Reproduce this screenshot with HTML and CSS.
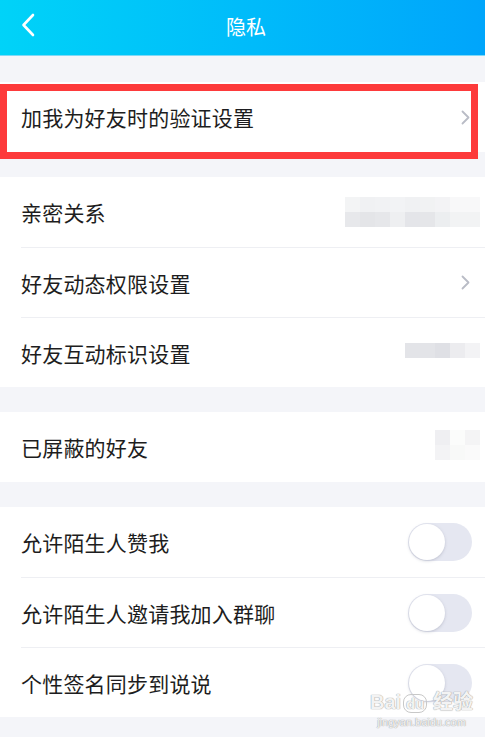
FILE: index.html
```html
<!DOCTYPE html>
<html lang="zh-CN">
<head>
  <meta charset="UTF-8">
  <meta name="viewport" content="width=device-width, initial-scale=1.0">
  <title>隐私</title>
  <link rel="stylesheet" href="styles.css">
</head>
<body>

  <!-- Thanh tiêu đề -->
  <div class="topbar">
    <svg class="back" width="14" height="24" viewBox="0 0 14 24">
      <path d="M12 2 L2.5 12 L12 22" fill="none" stroke="#fff" stroke-width="2.6" stroke-linecap="round" stroke-linejoin="round"/>
    </svg>
    <h1 class="title">隐私</h1>
  </div>

  <div class="content">
    <div class="group">
      <div class="row">
        <span class="label">加我为好友时的验证设置</span>
        <svg class="arrow" width="9" height="15" viewBox="0 0 9 15"><path d="M1.5 1.5 L7.5 7.5 L1.5 13.5" fill="none" stroke="#b9bcc6" stroke-width="1.8" stroke-linecap="round" stroke-linejoin="round"/></svg>
      </div>
      <div class="mark-box"></div>
    </div>

    <div class="group">
      <div class="row">
        <span class="label">亲密关系</span>
        <div class="mosaic mosaic-a">
          <i style="background:#f3f4f5"></i><i style="background:#f0f1f3"></i><i style="background:#f1f2f4"></i><i style="background:#f2f3f5"></i><i style="background:#f0f1f3"></i><i style="background:#f1f2f3"></i><i style="background:#f3f3f5"></i><i style="background:#f8f8f9"></i><i style="background:#f8f8f9"></i>
          <i style="background:#e7e8eb"></i><i style="background:#e4e5e8"></i><i style="background:#e6e7ea"></i><i style="background:#eeeff1"></i><i style="background:#e4e5e9"></i><i style="background:#e5e6e9"></i><i style="background:#eceef0"></i><i style="background:#f2f3f4"></i><i style="background:#f2f3f4"></i>
        </div>
      </div>
      <div class="row">
        <span class="label">好友动态权限设置</span>
        <svg class="arrow" width="9" height="15" viewBox="0 0 9 15"><path d="M1.5 1.5 L7.5 7.5 L1.5 13.5" fill="none" stroke="#b9bcc6" stroke-width="1.8" stroke-linecap="round" stroke-linejoin="round"/></svg>
      </div>
      <div class="row">
        <span class="label">好友互动标识设置</span>
        <div class="mosaic mosaic-b">
          <i style="background:#e3e4e8"></i><i style="background:#e3e4e8"></i><i style="background:#dfe0e5"></i><i style="background:#ececef"></i><i style="background:#f3f3f5"></i>
        </div>
      </div>
    </div>

    <div class="group">
      <div class="row">
        <span class="label">已屏蔽的好友</span>
        <div class="mosaic mosaic-c">
          <i style="background:#efeff2"></i><i style="background:#fbfcfb"></i><i style="background:#f4f4f5"></i>
          <i style="background:#f3f3f5"></i><i style="background:#f8f9f8"></i><i style="background:#fafafa"></i>
        </div>
      </div>
    </div>

    <div class="group">
      <div class="row">
        <span class="label">允许陌生人赞我</span>
        <span class="switch"><span class="knob"></span></span>
      </div>
      <div class="row">
        <span class="label">允许陌生人邀请我加入群聊</span>
        <span class="switch"><span class="knob"></span></span>
      </div>
      <div class="row">
        <span class="label">个性签名同步到说说</span>
        <span class="switch"><span class="knob"></span></span>
      </div>
    </div>
  </div>

  <!-- Watermark -->
  <div class="watermark">
    <div class="wm-top">Bai<span class="paw">du</span> 经验</div>
    <div class="wm-url">jingyan.baidu.com</div>
  </div>

</body>
</html>
```

FILE: styles.css
```css
* {
  margin: 0;
  padding: 0;
  box-sizing: border-box;
}

body {
  font-family: 'Noto Sans CJK SC', 'Noto Sans', sans-serif;
  background-color: #f4f5f9;
  width: 485px;
  height: 737px;
  overflow: hidden;
  position: relative;
  color: #1d1d20;
}

.topbar {
  height: 56px;
  background: linear-gradient(90deg, #00d3f8 0%, #00bcfa 50%, #00a5fb 100%);
  border-bottom: 1px solid #7fd9f6;
  display: flex;
  align-items: center;
  justify-content: center;
  position: relative;
}

.back {
  position: absolute;
  left: 21px;
  top: 13px;
}

.title {
  font-size: 20px;
  font-weight: 400;
  color: #fff;
  margin-left: 7px;
  margin-top: -3px;
}

.content {
  padding-top: 26px;
}

.group {
  background-color: #fff;
  margin-bottom: 25px;
  position: relative;
}

.row {
  height: 70px;
  margin-left: 21px;
  padding-right: 14px;
  display: flex;
  align-items: center;
}

.row + .row {
  border-top: 1px solid #eeeff3;
}

.label {
  font-size: 21px;
  flex: 1;
  letter-spacing: 0.2px;
}

.arrow {
  margin-right: 1px;
}

.mark-box {
  position: absolute;
  left: 0;
  top: 2px;
  width: 478px;
  height: 75px;
  border: 7px solid #fd3a3b;
}

.mosaic {
  display: grid;
  grid-auto-rows: 15px;
}

.mosaic i {
  display: block;
}

.mosaic-a {
  grid-template-columns: repeat(9, 15px);
  margin-right: -9px;
  margin-top: -1px;
}

.mosaic-b {
  grid-template-columns: repeat(5, 15px);
  margin-right: -9px;
  margin-top: -5px;
}

.mosaic-c {
  grid-template-columns: repeat(3, 15px);
  margin-right: -9px;
  margin-top: -4px;
}

.switch {
  width: 64px;
  height: 38px;
  border-radius: 19px;
  background-color: #e5e7f1;
  position: relative;
  margin-right: -1px;
}

.knob {
  position: absolute;
  left: 1px;
  top: 1px;
  width: 36px;
  height: 36px;
  border-radius: 50%;
  background-color: #fff;
  box-shadow: 0 1px 3px rgba(120, 125, 150, 0.35);
}

.watermark {
  position: absolute;
  right: 12px;
  bottom: 8px;
  text-align: center;
  color: rgba(255, 255, 255, 0.9);
  text-shadow: 0 0 1px #a0a0a0, 0 0 1px #a0a0a0;
  font-family: 'Liberation Sans', 'Noto Sans CJK SC', sans-serif;
}

.wm-top {
  font-size: 20px;
  font-weight: 700;
  line-height: 22px;
}

.paw {
  font-size: 15px;
  border: 1px solid #c8c8c8;
  border-radius: 8px;
  padding: 0 2px;
  margin-left: 2px;
}

.wm-url {
  font-size: 11px;
  line-height: 14px;
}
```
